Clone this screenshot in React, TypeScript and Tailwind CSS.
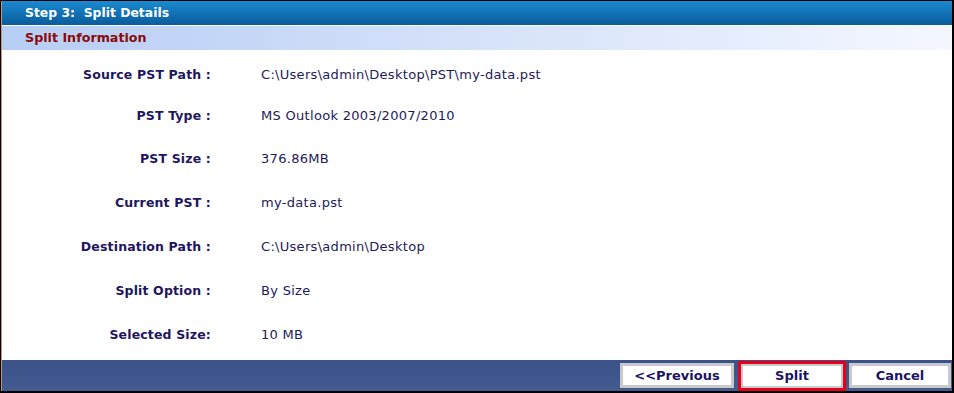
import React from "react";

const rows: { label: string; value: string; mt: string }[] = [
  { label: "Source PST Path :", value: "C:\\Users\\admin\\Desktop\\PST\\my-data.pst", mt: "mt-[15px]" },
  { label: "PST Type :", value: "MS Outlook 2003/2007/2010", mt: "mt-[21px]" },
  { label: "PST Size :", value: "376.86MB", mt: "mt-[23px]" },
  { label: "Current PST :", value: "my-data.pst", mt: "mt-[24px]" },
  { label: "Destination Path :", value: "C:\\Users\\admin\\Desktop", mt: "mt-[24px]" },
  { label: "Split Option :", value: "By Size", mt: "mt-[24px]" },
  { label: "Selected Size:", value: "10 MB", mt: "mt-[24px]" },
];

function Btn({ children, w }: { children: React.ReactNode; w: string }) {
  return (
    <div className={`${w} h-[25px] border-[3px] border-[#c9c9c9] bg-white flex items-center justify-center text-[13px] font-bold text-[#1b1464]`}>
      {children}
    </div>
  );
}

export default function App() {
  return (
    <div
      className="w-[954px] h-[393px] bg-black pt-[1px] pl-[1px] pr-[2px] pb-[2px]"
      style={{ fontFamily: '"DejaVu Sans", Verdana, sans-serif' }}
    >
      <div className="w-full h-full flex flex-col bg-white border-l border-[#c9975a]">
        <div className="h-[24px] bg-gradient-to-b from-[#1b8ad0] to-[#0a5c9c] flex items-center pl-[23px] text-[12.4px] font-bold text-white whitespace-pre">
          {"Step 3:  Split Details"}
        </div>
        <div className="h-[1px] bg-white" />
        <div className="h-[24px] bg-gradient-to-r from-[#b7cdf4] to-[#f4f7ff] flex items-center pl-[23px] text-[12.7px] font-bold text-[#8b0a0a]">
          Split Information
        </div>
        <div className="flex-1 flex flex-col">
          {rows.map((r) => (
            <div key={r.label} className={`${r.mt} h-[20px] flex items-center`}>
              <div className="w-[209px] text-right text-[12.5px] tracking-[0.15px] font-bold text-[#1e1660]">{r.label}</div>
              <div className="ml-[50px] text-[13px] tracking-[0.3px] text-[#231a5a]">{r.value}</div>
            </div>
          ))}
        </div>
        <div className="h-[31px] bg-gradient-to-b from-[#3a5289] to-[#435b8f] flex items-center justify-end pr-[1px]">
          <Btn w="w-[114px]">&lt;&lt;Previous</Btn>
          <div className="ml-[4px] w-[108px] h-[30px] border-[3px] border-[#e60018]">
            <div className="w-full h-full border-[2px] border-[#c9c9c9] bg-white flex items-center justify-center text-[13px] font-bold text-[#1b1464]">
              Split
            </div>
          </div>
          <div className="ml-[3px]">
            <Btn w="w-[102px]">Cancel</Btn>
          </div>
        </div>
      </div>
    </div>
  );
}
